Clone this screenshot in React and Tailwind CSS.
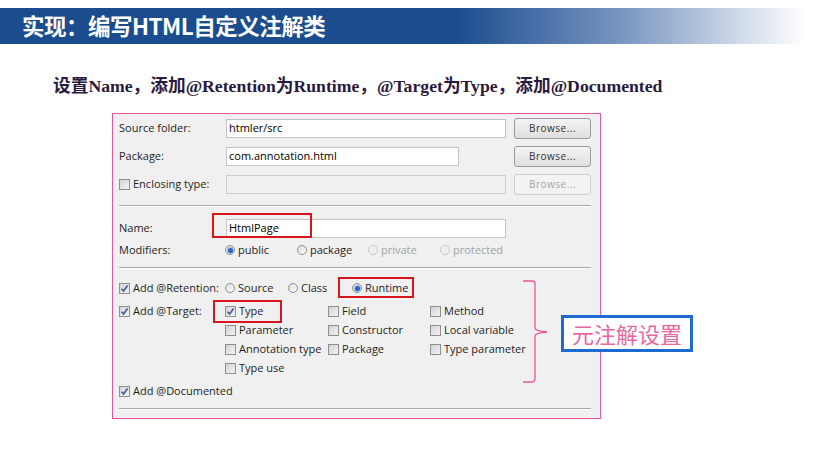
import React from 'react';

const ui = { fontFamily: '"Open Sans", "Noto Sans CJK SC", sans-serif' };

const CheckBox = ({ checked }) => (
  <span className="inline-flex items-center justify-center w-[11px] h-[11px] border border-[#8e8f8f] bg-[linear-gradient(135deg,#d4d4d4,#f2f2f2)] shrink-0">
    {checked && (
      <svg width="9" height="9" viewBox="0 0 9 9">
        <path d="M1.5 4.8 L3.6 7 L7.6 1.6" fill="none" stroke="#3c5a92" strokeWidth="1.6" />
      </svg>
    )}
  </span>
);

const Radio = ({ checked, disabled }) => (
  <span
    className={`inline-flex items-center justify-center w-[10px] h-[10px] rounded-full border shrink-0 ${
      disabled ? 'border-[#c9c9c9] bg-[#eeeeee]' : 'border-[#8e8f8f] bg-[linear-gradient(135deg,#dedede,#fafafa)]'
    }`}
  >
    {checked && <span className="w-[5px] h-[5px] rounded-full bg-[#2f66b8] ring-1 ring-[#9cc0ea]" />}
  </span>
);

const Option = ({ kind, checked, disabled, label, className = '' }) => (
  <span className={`relative flex items-center gap-[3px] ${className}`}>
    {kind === 'radio' ? <Radio checked={checked} disabled={disabled} /> : <CheckBox checked={checked} />}
    <span className={disabled ? 'text-[#a3a3a3]' : 'text-[#1e1e1e]'}>{label}</span>
  </span>
);

const BrowseButton = ({ disabled }) => (
  <button
    className={`ml-auto w-[77px] h-[21px] rounded-[3px] border text-[10px] tracking-[0.5px] ${
      disabled
        ? 'border-[#cfcfcf] bg-[#f3f3f3] text-[#a6a6a6]'
        : 'border-[#9a9a9a] bg-[linear-gradient(#f4f4f4,#dedede)] text-[#333333]'
    }`}
  >
    Browse...
  </button>
);

const Separator = ({ className = '' }) => (
  <div className={`h-[2px] border-t border-[#a8a8a8] border-b border-b-white ${className}`} />
);

export default function App() {
  return (
    <div className="relative w-[814px] h-[454px] bg-white overflow-hidden">
      {/* title bar */}
      <div className="mt-[8px] h-[36px] flex items-center pl-[22px] bg-[linear-gradient(to_right,#1b4d8e_0%,#1b4d8e_56%,#7694c0_76%,#ffffff_99%)]">
        <span
          className="text-white text-[22.5px] font-bold tracking-[-0.5px]"
          style={{ fontFamily: '"Noto Sans CJK SC", sans-serif' }}
        >
          实现：编写HTML自定义注解类
        </span>
      </div>

      <div
        className="mt-[32px] pl-[53px] h-[20px] leading-[20px] text-[17.7px] font-bold text-[#2a1a40]"
        style={{ fontFamily: '"Liberation Serif", "Noto Sans CJK SC", serif' }}
      >
        设置Name，添加@Retention为Runtime，@Target为Type，添加@Documented
      </div>

      {/* wizard dialog */}
      <div
        className="mt-[17px] ml-[112px] w-[489px] h-[306px] border border-[#e9559a] bg-[#f0f0f0] pl-[6px] pr-[9px] text-[11px]"
        style={ui}
      >
        <div className="flex items-center h-[28px]">
          <span className="w-[107px] text-[#1e1e1e]">Source folder:</span>
          <div className="w-[280px] h-[19px] bg-white border border-[#c4c4c4] pl-[2px] flex items-center">htmler/src</div>
          <BrowseButton />
        </div>
        <div className="flex items-center h-[28px]">
          <span className="w-[107px] text-[#1e1e1e]">Package:</span>
          <div className="w-[233px] h-[19px] bg-white border border-[#c4c4c4] pl-[2px] flex items-center">com.annotation.html</div>
          <BrowseButton />
        </div>
        <div className="flex items-center h-[28px]">
          <span className="w-[107px]">
            <Option kind="check" label="Enclosing type:" />
          </span>
          <div className="w-[280px] h-[19px] bg-[#f0f0f0] border border-[#cdcdcd]" />
          <BrowseButton disabled />
        </div>

        <Separator className="mt-[7px]" />

        <div className="flex items-center h-[24px] mt-[9px]">
          <span className="w-[107px] text-[#1e1e1e]">Name:</span>
          <div className="relative w-[280px] h-[19px] bg-white border border-[#c4c4c4] pl-[2px] flex items-center">
            HtmlPage
            <div className="absolute left-[-15px] top-[-7px] w-[100px] h-[25px] border-2 border-[#d8151b]" />
          </div>
        </div>
        <div className="flex items-center h-[20px]">
          <span className="w-[106px] text-[#1e1e1e]">Modifiers:</span>
          <Option kind="radio" checked label="public" className="w-[72px]" />
          <Option kind="radio" label="package" className="w-[71px]" />
          <Option kind="radio" disabled label="private" className="w-[72px]" />
          <Option kind="radio" disabled label="protected" />
        </div>

        <Separator className="mt-[7px]" />

        <div className="flex items-center h-[20px] mt-[9px]">
          <span className="w-[106px]">
            <Option kind="check" checked label="Add @Retention:" />
          </span>
          <Option kind="radio" label="Source" className="w-[63px]" />
          <Option kind="radio" label="Class" className="w-[64px]" />
          <span className="relative flex items-center h-full">
            <Option kind="radio" checked label="Runtime" />
            <span className="absolute left-[-14px] top-[-1px] w-[76px] h-[21px] border-2 border-[#d8151b]" />
          </span>
        </div>

        <div className="flex mt-[4px]">
          <span className="w-[106px] h-[19px] flex items-center">
            <Option kind="check" checked label="Add @Target:" />
          </span>
          <div className="grid grid-cols-[103px_102px_auto] auto-rows-[19px] items-center">
            <span className="relative flex items-center h-full">
              <Option kind="check" checked label="Type" />
              <span className="absolute left-[-12px] top-[-2px] w-[69px] h-[23px] border-2 border-[#d8151b]" />
            </span>
            <Option kind="check" label="Field" />
            <Option kind="check" label="Method" />
            <Option kind="check" label="Parameter" />
            <Option kind="check" label="Constructor" />
            <Option kind="check" label="Local variable" />
            <Option kind="check" label="Annotation type" />
            <Option kind="check" label="Package" />
            <Option kind="check" label="Type parameter" />
            <Option kind="check" label="Type use" />
          </div>
        </div>

        <div className="flex items-center h-[20px] mt-[3px]">
          <Option kind="check" checked label="Add @Documented" />
        </div>

        <Separator className="mt-[7px]" />
      </div>

      {/* callout brace */}
      <svg className="absolute left-[518px] top-[278px]" width="34" height="108" viewBox="0 0 34 108">
        <path
          d="M5 3 L14 3 Q17 3 17 6 L17 50 Q17 53 29 54 Q17 55 17 58 L17 100 Q17 104 14 104 L5 104"
          fill="none"
          stroke="#e9559a"
          strokeWidth="1.3"
        />
      </svg>
      <div
        className="absolute left-[561px] top-[315px] w-[132px] h-[37px] border-[3px] border-[#1d6ad0] bg-white flex items-center justify-center text-[22px] text-[#e9679f]"
        style={{ fontFamily: '"Noto Sans CJK SC", sans-serif' }}
      >
        元注解设置
      </div>
    </div>
  );
}
